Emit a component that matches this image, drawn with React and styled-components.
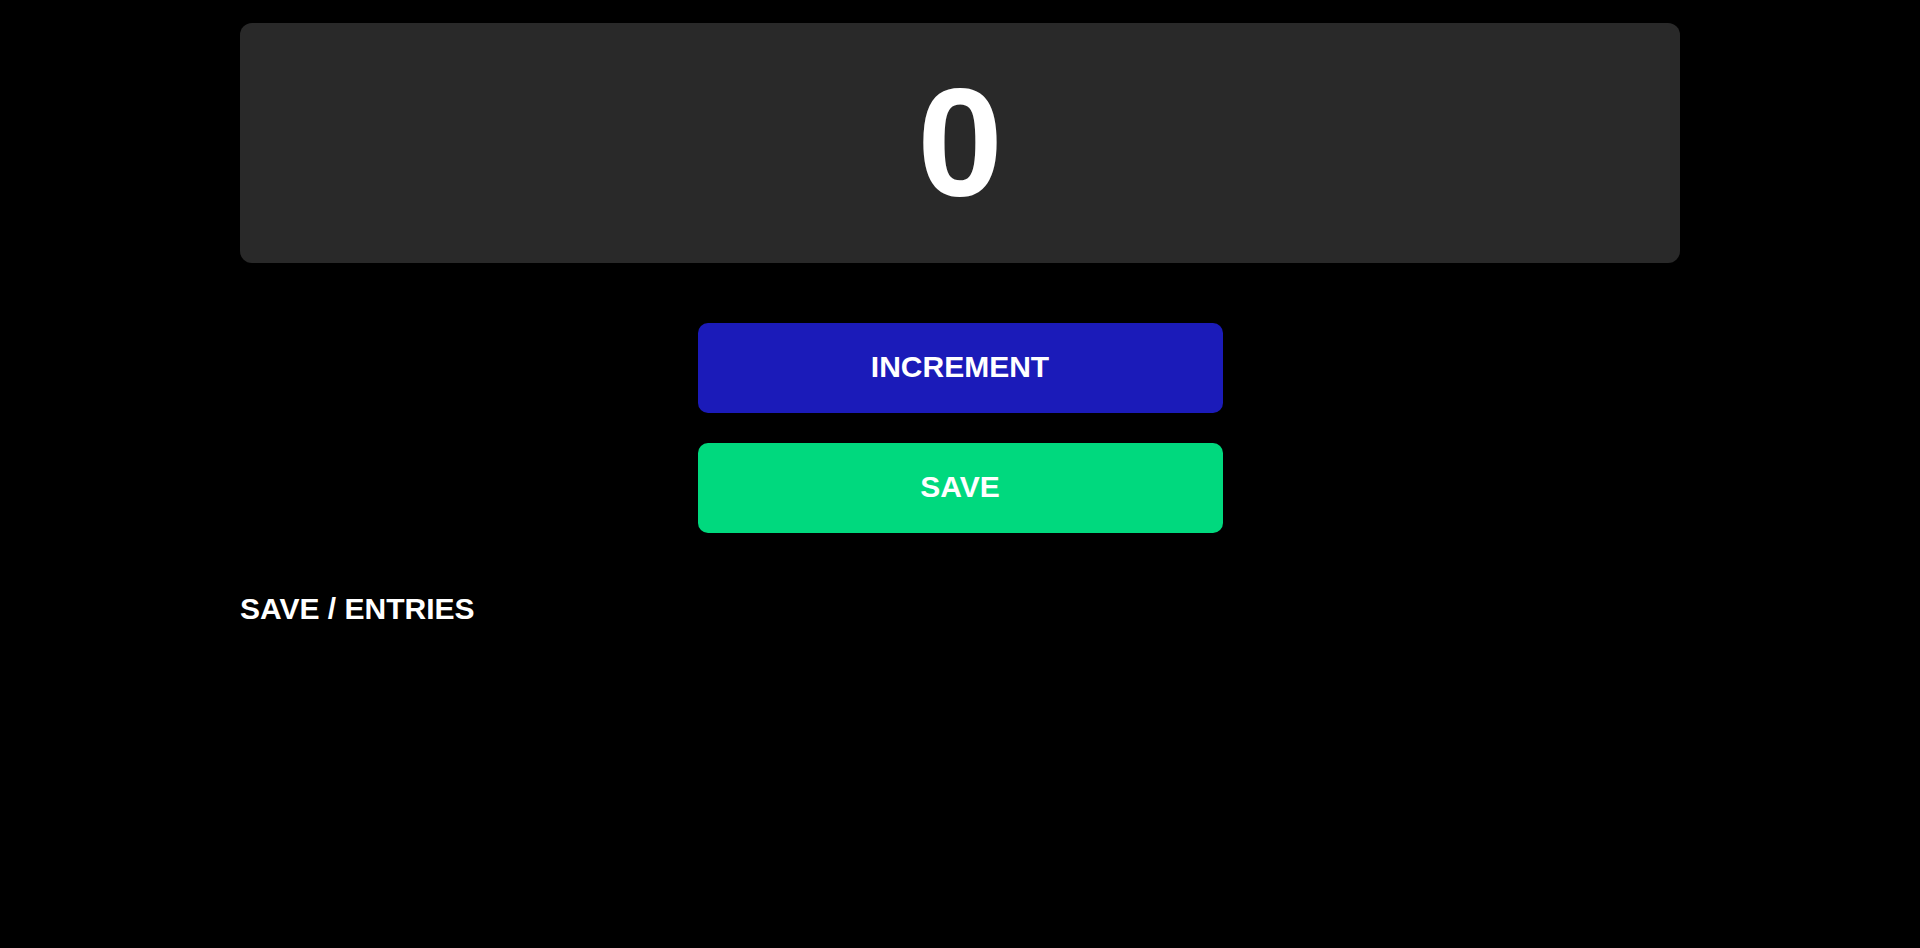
import React, { useState } from "react";
import styled, { createGlobalStyle } from "styled-components";

const GlobalStyle = createGlobalStyle`
  html, body {
    margin: 0;
    padding: 0;
    background: #000000;
    min-height: 100%;
  }
  body {
    font-family: "Liberation Sans", Arial, sans-serif;
    color: #ffffff;
  }
`;

const App = () => {
  const [count, setCount] = useState(0);
  const [entries, setEntries] = useState([]);

  return (
    <Page>
      <GlobalStyle />
      <CounterCard>
        <CountValue>{count}</CountValue>
      </CounterCard>
      <Actions>
        <ActionButton $bg="#1b1bb9" onClick={() => setCount(count + 1)}>
          INCREMENT
        </ActionButton>
        <ActionButton
          $bg="#00d97e"
          onClick={() => {
            setEntries([...entries, count]);
            setCount(0);
          }}
        >
          SAVE
        </ActionButton>
      </Actions>
      <EntriesTitle>
        SAVE / ENTRIES{entries.length > 0 && ": " + entries.join(" - ")}
      </EntriesTitle>
    </Page>
  );
};

export default App;

const Page = styled.div`
  box-sizing: border-box;
  width: 1440px;
  margin: 0 auto;
  padding-top: 23px;
  min-height: 948px;
  display: flex;
  flex-direction: column;
`;

const CounterCard = styled.div`
  height: 240px;
  background: #292929;
  border-radius: 12px;
  display: flex;
  align-items: center;
  justify-content: center;
`;

const CountValue = styled.h1`
  margin: 0;
  font-size: 154px;
  font-weight: 700;
  line-height: 1;
  color: #ffffff;
`;

const Actions = styled.div`
  display: flex;
  flex-direction: column;
  align-items: center;
  gap: 30px;
  margin-top: 60px;
`;

const ActionButton = styled.button`
  width: 525px;
  height: 90px;
  padding: 0 0 2px;
  border: none;
  border-radius: 10px;
  background: ${(p) => p.$bg};
  color: #ffffff;
  font-family: "Liberation Sans", Arial, sans-serif;
  font-size: 30px;
  font-weight: 700;
  cursor: pointer;
`;

const EntriesTitle = styled.h2`
  margin: 59px 0 0;
  font-size: 30px;
  font-weight: 700;
  color: #ffffff;
`;
